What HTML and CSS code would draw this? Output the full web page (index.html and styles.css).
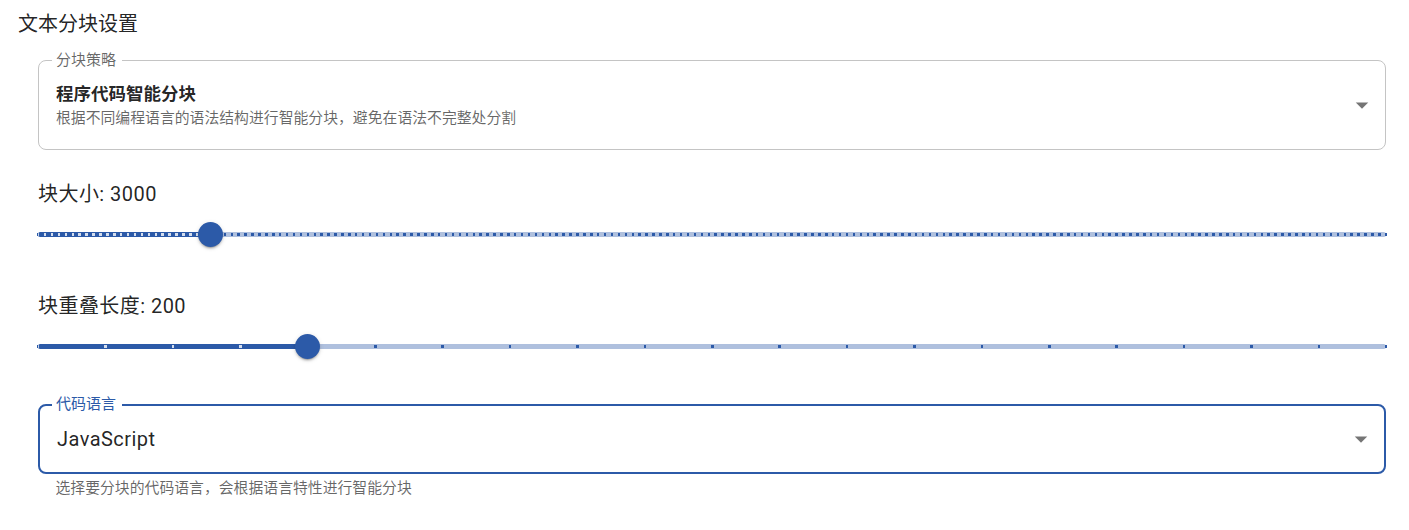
FILE: index.html
```html
<!DOCTYPE html>
<html lang="zh-CN">
<head>
<meta charset="utf-8">
<title>文本分块设置</title>
<link rel="stylesheet" href="styles.css">
</head>
<body>
<div class="page">
  <div class="title">文本分块设置</div>
  <div class="content">
    <div class="field field-plain">
      <span class="field-label">分块策略</span>
      <div class="field-body tall">
        <div class="option">
          <div class="option-title">程序代码智能分块</div>
          <div class="option-desc">根据不同编程语言的语法结构进行智能分块，避免在语法不完整处分割</div>
        </div>
        <svg class="arrow" viewBox="0 0 24 24" width="30" height="30"><path d="M7 10l5 5 5-5z"/></svg>
      </div>
    </div>

    <div class="slider-label first">块大小: 3000</div>
    <div class="slider">
      <div class="rail"></div>
      <div class="marks marks-dense"></div>
      <div class="track" style="width: 12.82%">
        <div class="marks marks-dense marks-active"></div>
      </div>
      <div class="thumb" style="left: 12.82%"></div>
    </div>

    <div class="slider-label">块重叠长度: 200</div>
    <div class="slider">
      <div class="rail"></div>
      <div class="marks marks-sparse"></div>
      <div class="track" style="width: 20%">
        <div class="marks marks-sparse marks-active"></div>
      </div>
      <div class="thumb" style="left: 20%"></div>
    </div>

    <div class="field field-focused">
      <span class="field-label">代码语言</span>
      <div class="field-body short">
        <div class="value">JavaScript</div>
        <svg class="arrow" viewBox="0 0 24 24" width="30" height="30"><path d="M7 10l5 5 5-5z"/></svg>
      </div>
    </div>
    <div class="helper">选择要分块的代码语言，会根据语言特性进行智能分块</div>
  </div>
</div>
</body>
</html>
```

FILE: styles.css
```css
* { box-sizing: border-box; }

html, body {
  margin: 0;
  padding: 0;
  background: #ffffff;
}

body {
  font-family: Roboto, "Noto Sans CJK SC", sans-serif;
  color: rgba(0, 0, 0, 0.87);
}

.page {
  padding: 9px 23px 0 18px;
}

.title {
  font-size: 20px;
  line-height: 30px;
  height: 30px;
}

.content {
  margin-left: 20px;
  display: flex;
  flex-direction: column;
}

.field {
  position: relative;
  border-radius: 8px;
}

.field-plain {
  margin-top: 21px;
  border: 1px solid #c4c4c4;
}

.field-focused {
  margin-top: 45px;
  border: 2px solid #2c5aa8;
}

.field-label {
  position: absolute;
  top: -9px;
  left: 13px;
  padding: 0 6px 0 4px;
  background: #ffffff;
  font-size: 15px;
  line-height: 16px;
  color: rgba(0, 0, 0, 0.6);
}

.field-focused .field-label {
  left: 12px;
  top: -10px;
  color: #2c5aa8;
}

.field-body {
  display: flex;
  align-items: center;
  justify-content: space-between;
  padding-left: 17px;
  padding-right: 8px;
}

.field-body.tall {
  height: 88px;
}

.field-body.short {
  height: 66px;
}

.option {
  display: flex;
  flex-direction: column;
  padding-top: 2px;
}

.option-title {
  font-size: 17.5px;
  font-weight: 700;
  line-height: 24px;
}

.option-desc {
  font-size: 14.85px;
  line-height: 24px;
  color: rgba(0, 0, 0, 0.6);
}

.value {
  font-size: 20px;
  line-height: 30px;
  letter-spacing: 0.45px;
}

.arrow {
  fill: rgba(0, 0, 0, 0.54);
  flex: none;
}

.slider-label {
  font-size: 20px;
  line-height: 30px;
  letter-spacing: 0.45px;
  margin-top: 44px;
}

.slider-label.first {
  margin-top: 29px;
}

.slider {
  position: relative;
  height: 25px;
  margin-top: 13px;
}

.rail {
  position: absolute;
  left: 0;
  right: 0;
  top: 10px;
  height: 5px;
  border-radius: 3px;
  background: #2c5aa8;
  opacity: 0.38;
}

.track {
  position: absolute;
  left: 0;
  top: 10px;
  height: 5px;
  border-radius: 3px;
  background: #2c5aa8;
  overflow: hidden;
}

.marks {
  position: absolute;
  left: -1.25px;
  top: 11.25px;
  width: calc(1348px + 2.5px);
  height: 2.5px;
}

.track .marks {
  top: 1.25px;
}

.marks-dense {
  background-image: repeating-linear-gradient(90deg, #2c5aa8 0 2.5px, transparent 2.5px 6.9128px);
}

.marks-sparse {
  background-image: repeating-linear-gradient(90deg, #2c5aa8 0 2.5px, transparent 2.5px 67.4px);
}

.marks-dense.marks-active {
  background-image: repeating-linear-gradient(90deg, rgba(255, 255, 255, 0.8) 0 2.5px, transparent 2.5px 6.9128px);
}

.marks-sparse.marks-active {
  background-image: repeating-linear-gradient(90deg, rgba(255, 255, 255, 0.8) 0 2.5px, transparent 2.5px 67.4px);
}

.thumb {
  position: absolute;
  top: 0;
  width: 25px;
  height: 25px;
  margin-left: -12.5px;
  border-radius: 50%;
  background: #2c5aa8;
  box-shadow: 0 3px 1px -2px rgba(0, 0, 0, 0.2), 0 2px 2px 0 rgba(0, 0, 0, 0.14), 0 1px 5px 0 rgba(0, 0, 0, 0.12);
}

.helper {
  margin-top: 2px;
  margin-left: 17.5px;
  font-size: 14.85px;
  line-height: 25px;
  color: rgba(0, 0, 0, 0.6);
}
```
